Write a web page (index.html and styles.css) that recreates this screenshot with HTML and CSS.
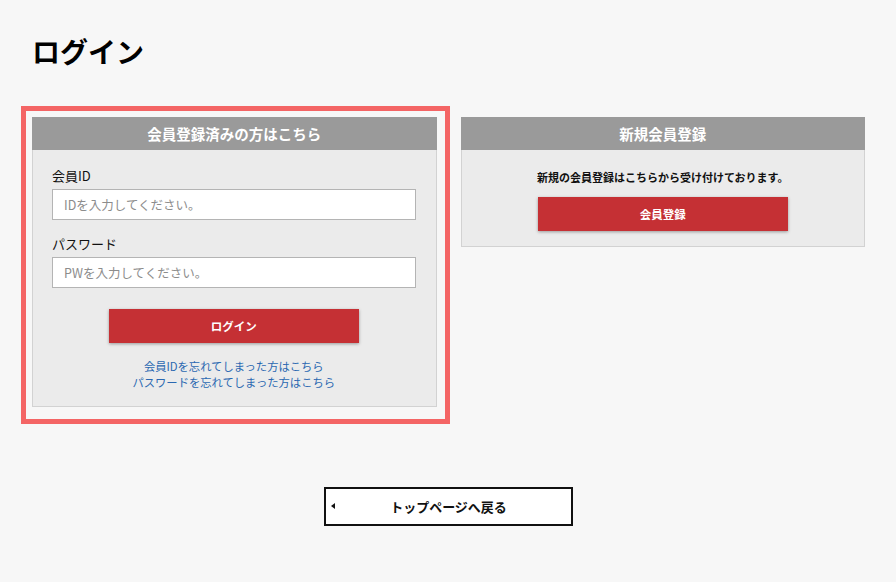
FILE: index.html
```
<html>
    <head>
        <meta charset="utf-8">
        <meta name="viewport" content="width=device-width, initial-scale=1.0">
        <title>ログイン</title>
        <link rel="stylesheet" href="styles.css">
    </head>
    <body>
        <div class="page">
            <h1 class="title">ログイン</h1>
            <div class="columns">
                <div class="box login">
                    <div class="boxHead">会員登録済みの方はこちら</div>
                    <div class="boxBody">
                        <div class="field">
                            <label for="memberId">会員ID</label>
                            <input id="memberId" type="text" placeholder="IDを入力してください。">
                        </div>
                        <div class="field">
                            <label for="pw">パスワード</label>
                            <input id="pw" type="password" placeholder="PWを入力してください。">
                        </div>
                        <button class="redBtn loginBtn">ログイン</button>
                        <div class="links">
                            <a href="#">会員IDを忘れてしまった方はこちら</a><br>
                            <a href="#">パスワードを忘れてしまった方はこちら</a>
                        </div>
                    </div>
                </div>
                <div class="box signup">
                    <div class="boxHead">新規会員登録</div>
                    <div class="boxBody center">
                        <p class="note">新規の会員登録はこちらから受け付けております。</p>
                        <button class="redBtn">会員登録</button>
                    </div>
                </div>
            </div>
            <div class="back">
                <a class="backBtn" href="#">トップページへ戻る</a>
            </div>
        </div>
    </body>
</html>
```

FILE: styles.css
```
html, body{
    margin: 0px;
    padding: 0px;
    background-color: #f7f7f7;
    color: #111;
    font-family: 'Noto Sans CJK JP', 'Noto Sans', sans-serif;
}
.page{
    padding: 31px 31px 0px 32px;
}
.title{
    margin: 0px;
    font-size: 28px;
    line-height: 40px;
    font-weight: bold;
    color: #000;
}
.columns{
    display: flex;
    gap: 24px;
    align-items: flex-start;
    margin-top: 46px;
}
.box{
    flex: 1;
    background-color: #ebebeb;
    border: 1px solid #d2d2d2;
    border-top: none;
}
/* red highlight frame round the login box */
.login{
    position: relative;
}
.login::after{
    content: '';
    position: absolute;
    top: -11px;
    left: -12px;
    right: -14px;
    bottom: -18px;
    border: 5px solid #f46565;
    pointer-events: none;
}
.boxHead{
    height: 33px;
    line-height: 33px;
    background-color: #9a9a9a;
    color: white;
    font-size: 14.5px;
    font-weight: bold;
    text-align: center;
    margin: 0px -1px;
}
.boxBody{
    padding: 16px 20px 16px 19px;
}
.center{
    text-align: center;
    padding: 19px 20px 15px 20px;
}
.field{
    margin-bottom: 14px;
}
.field label{
    display: block;
    font-size: 13px;
    line-height: 20px;
    margin-bottom: 3px;
}
.field input{
    display: block;
    width: 100%;
    height: 31px;
    box-sizing: border-box;
    border: 1px solid #b4b4b4;
    background-color: white;
    padding: 0px 11px;
    font-family: inherit;
    font-size: 12.5px;
    outline: none;
}
.field input::placeholder{
    color: #8c8c8c;
}
.redBtn{
    display: block;
    width: 250px;
    height: 34px;
    margin: 0px auto;
    border: none;
    background-color: #c53034;
    color: white;
    font-family: inherit;
    font-size: 11.5px;
    font-weight: bold;
    box-shadow: 0px 1px 3px rgba(0,0,0,0.35);
}
.loginBtn{
    margin-top: 21px;
}
.links{
    margin-top: 15px;
    text-align: center;
    font-size: 11.3px;
    line-height: 16px;
}
.links a{
    color: #2a68b1;
    text-decoration: none;
}
.note{
    margin: 0px 0px 12px 0px;
    font-size: 11px;
    line-height: 16px;
    font-weight: bold;
}
.back{
    display: flex;
    justify-content: center;
    margin-top: 80px;
}
.backBtn{
    position: relative;
    display: block;
    width: 249px;
    height: 39px;
    line-height: 35px;
    box-sizing: border-box;
    border: 2px solid #111;
    background-color: white;
    color: #111;
    text-align: center;
    font-size: 13px;
    font-weight: bold;
    text-decoration: none;
}
.backBtn::before{
    content: '';
    position: absolute;
    left: 5px;
    top: 14px;
    border-style: solid;
    border-width: 3px 4px 3px 0px;
    border-color: transparent #111 transparent transparent;
}
```
